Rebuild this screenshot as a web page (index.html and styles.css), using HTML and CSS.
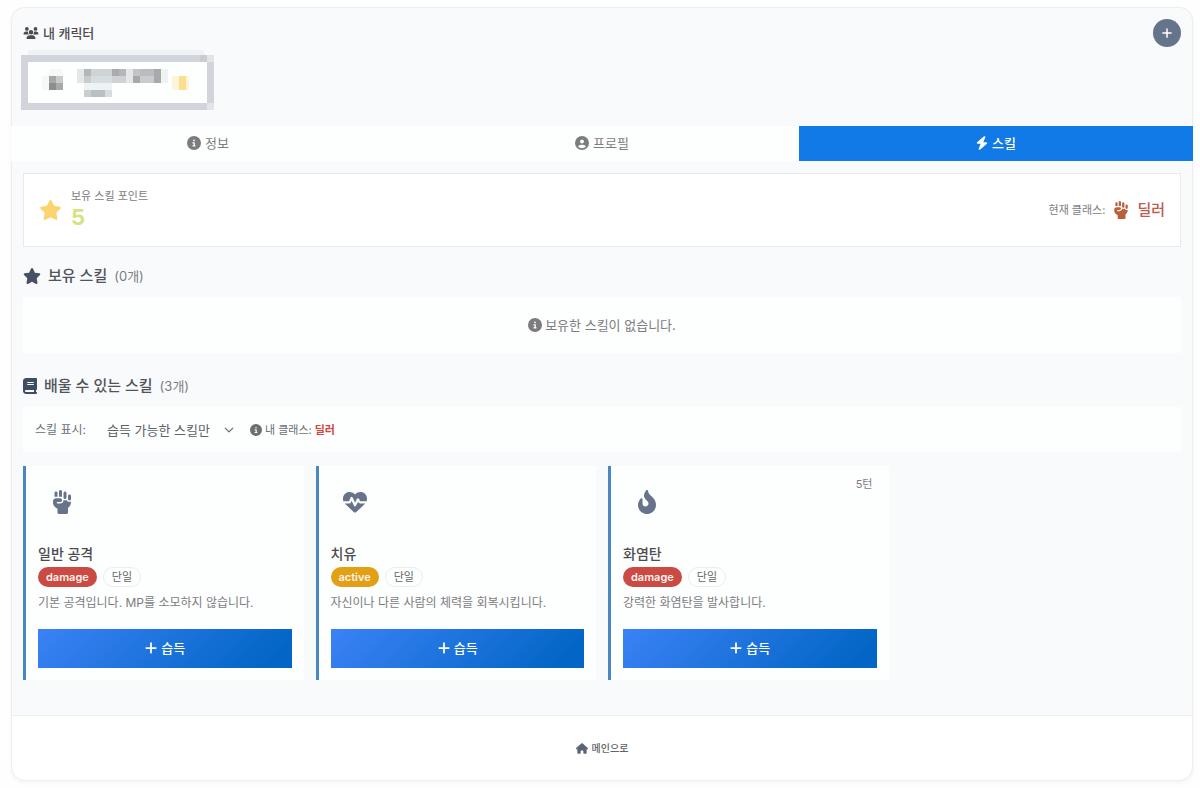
FILE: index.html
```html
<!DOCTYPE html>
<html lang="ko">
<head>
    <meta charset="UTF-8">
    <meta name="viewport" content="width=device-width, initial-scale=1.0">
    <title>내 캐릭터</title>
    <link rel="stylesheet" href="styles.css">
</head>
<body>
    <!-- Icon set -->
    <svg class="sprite" aria-hidden="true">
        <symbol id="users" viewBox="0 0 640 512"><path d="M144 0a80 80 0 1 1 0 160A80 80 0 1 1 144 0zM512 0a80 80 0 1 1 0 160A80 80 0 1 1 512 0zM0 298.7C0 239.8 47.8 192 106.7 192h42.7c15.9 0 31 3.5 44.6 9.7c-1.3 7.2-1.9 14.7-1.9 22.3c0 38.2 16.8 72.5 43.3 96c-.2 0-.4 0-.7 0H21.3C9.6 320 0 310.4 0 298.7zM405.3 320c-.2 0-.4 0-.7 0c26.6-23.5 43.3-57.8 43.3-96c0-7.6-.7-15-1.9-22.3c13.6-6.3 28.7-9.7 44.6-9.7h42.7C592.2 192 640 239.8 640 298.7c0 11.8-9.6 21.3-21.3 21.3H405.3zM224 224a96 96 0 1 1 192 0 96 96 0 1 1-192 0zM128 485.3C128 411.7 187.7 352 261.3 352H378.7C452.3 352 512 411.7 512 485.3c0 14.7-11.9 26.7-26.7 26.7H154.7c-14.7 0-26.7-11.9-26.7-26.7z"/></symbol>
        <symbol id="plus" viewBox="0 0 448 512"><path d="M256 80c0-17.7-14.3-32-32-32s-32 14.3-32 32V224H48c-17.7 0-32 14.3-32 32s14.3 32 32 32H192V432c0 17.7 14.3 32 32 32s32-14.3 32-32V288H400c17.7 0 32-14.3 32-32s-14.3-32-32-32H256V80z"/></symbol>
        <symbol id="info" viewBox="0 0 512 512"><path d="M256 512A256 256 0 1 0 256 0a256 256 0 1 0 0 512zM216 336h24V272H216c-13.3 0-24-10.7-24-24s10.7-24 24-24h48c13.3 0 24 10.7 24 24v88h8c13.3 0 24 10.7 24 24s-10.7 24-24 24H216c-13.3 0-24-10.7-24-24s10.7-24 24-24zm40-208a32 32 0 1 1 0 64 32 32 0 1 1 0-64z"/></symbol>
        <symbol id="user" viewBox="0 0 512 512"><path d="M399 384.2C376.9 345.8 335.4 320 288 320H224c-47.4 0-88.9 25.8-111 64.2c35.2 39.2 86.2 63.8 143 63.8s107.8-24.7 143-63.8zM0 256a256 256 0 1 1 512 0A256 256 0 1 1 0 256zm256 16a72 72 0 1 0 0-144 72 72 0 1 0 0 144z"/></symbol>
        <symbol id="bolt" viewBox="0 0 448 512"><path d="M349.4 44.6c5.9-13.7 1.5-29.7-10.6-38.5s-28.6-8-39.9 1.8l-256 224c-10 8.8-13.6 22.9-8.9 35.3S50.7 288 64 288H175.5L98.6 467.4c-5.9 13.7-1.5 29.7 10.6 38.5s28.6 8 39.9-1.8l256-224c10-8.8 13.6-22.9 8.9-35.3s-16.6-20.7-30-20.7H272.5L349.4 44.6z"/></symbol>
        <symbol id="star" viewBox="0 0 576 512"><path d="M316.9 18C311.6 7 300.4 0 288.1 0s-23.4 7-28.8 18L195 150.3 51.4 171.5c-12 1.8-22 10.2-25.7 21.7s-.7 24.2 7.9 32.7L137.8 329 113.2 474.7c-2 12 3 24.2 12.9 31.3s23 8 33.8 2.3l128.3-68.5 128.3 68.5c10.8 5.7 23.9 4.9 33.8-2.3s14.9-19.3 12.9-31.3L438.5 329 542.7 225.9c8.6-8.5 11.7-21.2 7.9-32.7s-13.7-19.9-25.7-21.7L381.2 150.3 316.9 18z"/></symbol>
        <symbol id="book" viewBox="0 0 448 512"><path d="M96 0C43 0 0 43 0 96V416c0 53 43 96 96 96H384h32c17.7 0 32-14.3 32-32s-14.3-32-32-32V384c17.7 0 32-14.3 32-32V32c0-17.7-14.3-32-32-32H384 96zm0 384H352v64H96c-17.7 0-32-14.3-32-32s14.3-32 32-32zm32-240c0-8.8 7.2-16 16-16H336c8.8 0 16 7.2 16 16s-7.2 16-16 16H144c-8.8 0-16-7.2-16-16zm16 48H336c8.8 0 16 7.2 16 16s-7.2 16-16 16H144c-8.8 0-16-7.2-16-16s7.2-16 16-16z"/></symbol>
        <symbol id="fist" viewBox="0 0 448 512"><path d="M192 0c17.7 0 32 14.3 32 32V144H160V32c0-17.7 14.3-32 32-32zM64 64c0-17.7 14.3-32 32-32s32 14.3 32 32v80H64V64zm192 0c0-17.7 14.3-32 32-32s32 14.3 32 32v96c0 17.7-14.3 32-32 32s-32-14.3-32-32V64zm96 64c0-17.7 14.3-32 32-32s32 14.3 32 32v64c0 17.7-14.3 32-32 32s-32-14.3-32-32V128zm-96 88l0-.6c9.4 5.4 20.3 8.6 32 8.6c13.2 0 25.4-4 35.6-10.8c8.7 24.9 32.5 42.8 60.4 42.8c11.7 0 22.6-3.1 32-8.6V256c0 52.3-25.1 98.8-64 128v96c0 17.7-14.3 32-32 32H160c-17.7 0-32-14.3-32-32V401.6c-17.3-7.9-33.2-18.8-46.9-32.5L69.5 357.5C45.5 333.5 32 300.9 32 267V240c0-35.3 28.7-64 64-64h88c22.1 0 40 17.9 40 40s-17.9 40-40 40H128c-8.8 0-16 7.2-16 16s7.2 16 16 16h56c39.8 0 72-32.2 72-72z"/></symbol>
        <symbol id="heart" viewBox="0 0 512 512"><path d="M228.3 469.1L47.6 300.4c-4.2-3.9-8.2-8.1-11.9-12.4h87c22.6 0 43-13.6 51.7-34.5l10.5-25.2 49.3 109.5c3.8 8.5 12.1 14 21.4 14.1s17.8-5 22-13.3L320 253.7l1.7 3.4c9.5 19 28.9 31 50.1 31H476.3c-3.7 4.3-7.7 8.5-11.9 12.4L283.7 469.1c-7.5 7-17.4 10.9-27.7 10.9s-20.2-3.9-27.7-10.9zM503.7 240h-132c-3 0-5.8-1.7-7.2-4.4l-23.2-46.3c-4.1-8.1-12.4-13.3-21.5-13.3s-17.4 5.1-21.5 13.3l-41.4 82.8L205.9 158.2c-3.9-8.7-12.7-14.3-22.2-14.1s-18.1 5.9-21.8 14.8l-31.8 76.3c-1.2 3-4.2 4.9-7.4 4.9H16c-2.6 0-5 .4-7.3 1.1C3 225.2 0 208.2 0 190.9v-5.8c0-69.9 50.5-129.5 119.4-141C165 36.5 211.4 51.4 244 84l12 12 12-12c32.6-32.6 79-47.5 124.6-39.9C461.5 55.6 512 115.2 512 185.1v5.8c0 16.9-2.8 33.5-8.3 49.1z"/></symbol>
        <symbol id="fire" viewBox="0 0 384 512"><path d="M216 23.86c0-23.8-30.65-32.77-44.15-13.04C48 191.85 224 200 224 288c0 35.63-29.11 64.46-64.85 63.99-35.17-.45-63.15-29.77-63.15-64.94v-85.51c0-21.7-26.47-32.23-41.43-16.5C27.8 213.16 0 261.33 0 320c0 105.87 86.13 192 192 192s192-86.13 192-192c0-170.29-168-193-168-296.14z"/></symbol>
        <symbol id="house" viewBox="0 0 576 512"><path d="M575.8 255.5c0 18-15 32.1-32 32.1h-32l.7 160.2c0 2.7-.2 5.4-.5 8.1V472c0 22.1-17.9 40-40 40H456c-1.1 0-2.2 0-3.3-.1c-1.4 .1-2.8 .1-4.2 .1H416 392c-22.1 0-40-17.9-40-40V448 384c0-17.7-14.3-32-32-32H256c-17.7 0-32 14.3-32 32v64 24c0 22.1-17.9 40-40 40H160 128.1c-1.5 0-3-.1-4.5-.2c-1.2 .1-2.4 .2-3.6 .2H104c-22.1 0-40-17.9-40-40V360c0-.9 0-1.9 .1-2.8V287.6H32c-18 0-32-14-32-32.1c0-9 3-17 10-24L266.4 8c7-7 15-8 22-8s15 2 21 7L564.8 231.5c8 7 12 15 11 24z"/></symbol>
        <symbol id="chevron" viewBox="0 0 16 16"><path d="M2 5l6 6 6-6" fill="none" stroke="currentColor" stroke-width="2" stroke-linecap="round" stroke-linejoin="round"/></symbol>
    </svg>

    <div class="panel">
        <header class="panel-header">
            <div class="header-row">
                <h1 class="page-title"><svg class="icon icon-wide"><use href="#users"/></svg>내 캐릭터</h1>
                <button type="button" class="add-btn" aria-label="캐릭터 추가"><svg class="icon"><use href="#plus"/></svg></button>
            </div>
            <button type="button" class="character" aria-label="캐릭터">
                <!-- Pixelated character card -->
                <svg class="character-art" viewBox="0 0 193 60" shape-rendering="crispEdges">
                    <path fill="#f0f3f4" d="M7 0h176v5H7z"/>
                    <path fill="#d1d5db" d="M0 5h193v55H0z"/>
                    <path fill="#c9ccd0" d="M179 5h7v7h-7z"/>
                    <path fill="#e2e4e8" d="M186 5h7v7h-7zM186 53h7v7h-7z"/>
                    <path fill="#fdfefe" d="M7 12h179v41H7z"/>
                    <path fill="#f6f7f7" d="M28 19h14v7H28zM21 26h7v14h-7z"/>
                    <path fill="#a5a8a8" d="M28 26h7v7h-7z"/><path fill="#c8c9c9" d="M35 26h7v7h-7z"/>
                    <path fill="#8c8d8e" d="M28 33h7v7h-7z"/><path fill="#a7a8a9" d="M35 33h7v7h-7z"/>
                    <path fill="#e4e7e7" d="M56 19h7v14h-7z"/>
                    <path fill="#b4b6b7" d="M63 19h7v7h-7z"/><path fill="#c8cccd" d="M63 26h7v7h-7z"/>
                    <path fill="#ced3d6" d="M70 19h21v7H70z"/><path fill="#d7dddf" d="M70 26h21v7H70z"/>
                    <path fill="#aaabac" d="M91 19h7v7h-7z"/><path fill="#b4b7b8" d="M98 19h7v7h-7z"/>
                    <path fill="#cfd2d4" d="M91 26h14v7H91z"/><path fill="#e4e6e8" d="M105 19h7v14h-7z"/>
                    <path fill="#c2c4c7" d="M112 19h7v7h-7z"/><path fill="#a6a8a9" d="M112 26h7v7h-7z"/>
                    <path fill="#babdc0" d="M119 19h14v7h-14z"/><path fill="#c9cccf" d="M119 26h14v7h-14z"/>
                    <path fill="#a8a9aa" d="M133 19h7v14h-7z"/><path fill="#f0f2f2" d="M140 19h7v14h-7z"/>
                    <path fill="#edf3f4" d="M63 33h28v7H63z"/>
                    <path fill="#c7ced0" d="M63 40h7v7h-7z"/><path fill="#b9c0c2" d="M70 40h14v7H70z"/><path fill="#d8ddde" d="M84 40h7v7h-7z"/>
                    <path fill="#fdf5db" d="M151 26h17v14h-17z"/><path fill="#fbdf8c" d="M158 26h7v14h-7z"/>
                </svg>
            </button>
        </header>

        <nav class="tabs">
            <button type="button" class="tab"><svg class="icon"><use href="#info"/></svg>정보</button>
            <button type="button" class="tab"><svg class="icon"><use href="#user"/></svg>프로필</button>
            <button type="button" class="tab active"><svg class="icon icon-bolt"><use href="#bolt"/></svg>스킬</button>
        </nav>

        <main class="content">
            <section class="points-card">
                <svg class="icon points-star"><use href="#star"/></svg>
                <div class="points">
                    <div class="points-label">보유 스킬 포인트</div>
                    <div class="points-value">5</div>
                </div>
                <div class="class-info">
                    <span>현재 클래스:</span>
                    <svg class="icon class-icon"><use href="#fist"/></svg>
                    <strong class="class-name">딜러</strong>
                </div>
            </section>

            <section class="section">
                <h2 class="section-title"><svg class="icon title-star"><use href="#star"/></svg>보유 스킬 <span class="count">(0개)</span></h2>
                <p class="empty"><svg class="icon"><use href="#info"/></svg>보유한 스킬이 없습니다.</p>
            </section>

            <section class="section">
                <h2 class="section-title"><svg class="icon title-book"><use href="#book"/></svg>배울 수 있는 스킬 <span class="count">(3개)</span></h2>
                <div class="filter">
                    <label for="skill-filter">스킬 표시:</label>
                    <div class="select-wrap">
                        <select id="skill-filter">
                            <option>습득 가능한 스킬만</option>
                        </select>
                        <svg class="icon chevron"><use href="#chevron"/></svg>
                    </div>
                    <div class="filter-info"><svg class="icon"><use href="#info"/></svg>내 클래스: <strong>딜러</strong></div>
                </div>

                <div class="skill-grid">
                    <article class="skill">
                        <div class="skill-top">
                            <div class="skill-icon"><svg class="icon"><use href="#fist"/></svg></div>
                        </div>
                        <h3 class="skill-name">일반 공격</h3>
                        <div class="badges"><span class="badge damage">damage</span><span class="badge target">단일</span></div>
                        <p class="skill-desc">기본 공격입니다. MP를 소모하지 않습니다.</p>
                        <button type="button" class="learn-btn"><svg class="icon"><use href="#plus"/></svg>습득</button>
                    </article>
                    <article class="skill">
                        <div class="skill-top">
                            <div class="skill-icon"><svg class="icon"><use href="#heart"/></svg></div>
                        </div>
                        <h3 class="skill-name">치유</h3>
                        <div class="badges"><span class="badge active">active</span><span class="badge target">단일</span></div>
                        <p class="skill-desc">자신이나 다른 사람의 체력을 회복시킵니다.</p>
                        <button type="button" class="learn-btn"><svg class="icon"><use href="#plus"/></svg>습득</button>
                    </article>
                    <article class="skill">
                        <div class="skill-top">
                            <div class="skill-icon"><svg class="icon"><use href="#fire"/></svg></div>
                            <span class="cooldown">5턴</span>
                        </div>
                        <h3 class="skill-name">화염탄</h3>
                        <div class="badges"><span class="badge damage">damage</span><span class="badge target">단일</span></div>
                        <p class="skill-desc">강력한 화염탄을 발사합니다.</p>
                        <button type="button" class="learn-btn"><svg class="icon"><use href="#plus"/></svg>습득</button>
                    </article>
                </div>
            </section>
        </main>

        <footer class="panel-footer">
            <a href="#" class="home-link"><svg class="icon"><use href="#house"/></svg>메인으로</a>
        </footer>
    </div>
</body>
</html>
```

FILE: styles.css
```css
* {
    box-sizing: border-box;
}
body {
    font-family: Inter, 'Noto Sans CJK KR', sans-serif;
    font-size: 13px;
    line-height: 20px;
    margin: 0;
    padding: 7px 7px 8px 11px;
    color: #55585e;
    background-color: #fefefe;
}
h1, h2, h3, p {
    margin: 0;
}
button, select {
    font-family: inherit;
    border: none;
    padding: 0;
}
button {
    cursor: pointer;
}
.sprite {
    display: none;
}
.icon {
    width: 14px;
    height: 14px;
    fill: currentColor;
    flex-shrink: 0;
}
.panel {
    background-color: #f9fafc;
    border-radius: 14px;
    box-shadow: inset 0 0 0 1px #eceef0, 0 2px 4px rgba(0,0,0,0.04);
    overflow: hidden;
}

/* Header */
.panel-header {
    padding: 12px 12px 16px;
}
.header-row {
    display: flex;
    align-items: center;
    justify-content: space-between;
}
.page-title {
    display: flex;
    align-items: center;
    gap: 4px;
    font-size: 13px;
    font-weight: 500;
    color: #4c4c4e;
}
.icon-wide {
    width: 16px;
    height: 12px;
}
.add-btn {
    display: flex;
    align-items: center;
    justify-content: center;
    width: 28px;
    height: 28px;
    border-radius: 50%;
    color: white;
    background-color: #64748b;
}
.add-btn .icon {
    width: 12px;
    height: 12px;
}
.character {
    display: block;
    margin: 3px 0 0 -2px;
    background: none;
}
.character-art {
    display: block;
    width: 193px;
    height: 60px;
}

/* Tabs */
.tabs {
    display: grid;
    grid-template-columns: repeat(3, 1fr);
}
.tab {
    display: flex;
    align-items: center;
    justify-content: center;
    gap: 4px;
    height: 35px;
    padding-bottom: 2px;
    font-size: 13px;
    color: #7c7c7e;
    background-color: #fdfefe;
}
.tab.active {
    color: white;
    font-weight: 500;
    background-color: #127ae6;
}
.icon-bolt {
    width: 12px;
}

/* Content */
.content {
    padding: 12px 12px 35px;
}
.points-card {
    display: flex;
    align-items: center;
    min-height: 74px;
    padding: 12px 15px;
    margin-bottom: 16px;
    background-color: white;
    border: 1px solid #e8eaed;
}
.points-star {
    width: 23px;
    height: 20px;
    margin-right: 9px;
    color: #fad46f;
}
.points-label {
    font-size: 11px;
    line-height: 14px;
    color: #7c7c7e;
}
.points-value {
    font-size: 22px;
    line-height: 28px;
    font-weight: 700;
    color: #d5e382;
}
.class-info {
    display: flex;
    align-items: center;
    gap: 8px;
    margin-left: auto;
    font-size: 11px;
    color: #7c7c7e;
}
.class-icon {
    width: 16px;
    height: 18px;
    color: #b9603a;
}
.class-name {
    font-size: 15px;
    font-weight: 500;
    color: #bd5b4d;
}
.section + .section {
    margin-top: 20px;
}
.section-title {
    display: flex;
    align-items: center;
    gap: 7px;
    height: 26px;
    margin-bottom: 8px;
    font-size: 15px;
    font-weight: 500;
    color: #505459;
}
.title-star {
    width: 18px;
    height: 16px;
    color: #475165;
}
.title-book {
    height: 16px;
    color: #3f4d63;
}
.count {
    font-size: 13px;
    font-weight: 400;
    color: #7c7c7e;
}
.empty {
    display: flex;
    align-items: center;
    justify-content: center;
    gap: 3px;
    padding: 18px;
    color: #7c7c7e;
    background-color: #fdfefe;
}

/* Filter */
.filter {
    display: flex;
    align-items: center;
    min-height: 45px;
    padding: 0 12px;
    margin-bottom: 14px;
    font-size: 12px;
    color: #6b6e73;
    background-color: #fdfefe;
}
.select-wrap {
    position: relative;
    margin: 0 16px 0 21px;
}
.select-wrap select {
    appearance: none;
    height: 24px;
    padding-right: 24px;
    font-size: 13px;
    color: #5f6267;
    background: transparent;
}
.chevron {
    position: absolute;
    right: 0;
    top: 7px;
    width: 10px;
    height: 10px;
    pointer-events: none;
}
.filter-info {
    display: flex;
    align-items: center;
    gap: 3px;
    font-size: 11px;
}
.filter-info .icon {
    width: 12px;
    height: 12px;
}
.filter-info strong {
    color: #d0463b;
}

/* Skill cards */
.skill-grid {
    display: grid;
    grid-template-columns: repeat(auto-fill, minmax(280px, 1fr));
    gap: 12px;
}
.skill {
    padding: 12px;
    background-color: #fdfefe;
    border-left: 3px solid #4a86c0;
}
.skill-top {
    display: flex;
    justify-content: space-between;
    margin-bottom: 18px;
}
.skill-icon {
    display: flex;
    align-items: center;
    justify-content: center;
    width: 48px;
    height: 48px;
    color: #667389;
}
.skill-icon .icon {
    width: 24px;
    height: 24px;
}
.cooldown {
    padding-right: 4px;
    font-size: 11px;
    line-height: 12px;
    color: #7c7c7e;
}
.skill-name {
    font-size: 14px;
    font-weight: 500;
    line-height: 20px;
    color: #4c4c4e;
}
.badges {
    display: flex;
    gap: 6px;
    margin: 3px 0 7px;
}
.badge {
    height: 20px;
    padding: 0 8px;
    border-radius: 10px;
    font-size: 11px;
    font-weight: 600;
    line-height: 20px;
    color: #fdf3ee;
}
.badge.damage {
    background-color: #cb4a43;
}
.badge.active {
    background-color: #e2a014;
}
.badge.target {
    font-weight: 400;
    line-height: 18px;
    color: #666;
    border: 1px solid #ebecee;
}
.skill-desc {
    margin-bottom: 17px;
    font-size: 12px;
    line-height: 18px;
    color: #7c7c7e;
}
.learn-btn {
    display: flex;
    align-items: center;
    justify-content: center;
    gap: 3px;
    width: 100%;
    height: 39px;
    padding-bottom: 2px;
    font-size: 13px;
    font-weight: 500;
    color: white;
    background: linear-gradient(135deg, #3b82f6, #0366c6 90%);
}

/* Footer */
.panel-footer {
    display: flex;
    justify-content: center;
    padding: 22px;
    background-color: white;
    border: 1px solid #eceef0;
    border-radius: 0 0 14px 14px;
}
.home-link {
    display: flex;
    align-items: center;
    gap: 4px;
    font-size: 10px;
    font-weight: 500;
    color: #606369;
    text-decoration: none;
}
.home-link .icon {
    width: 12px;
    height: 11px;
    color: #5c6478;
}
```
